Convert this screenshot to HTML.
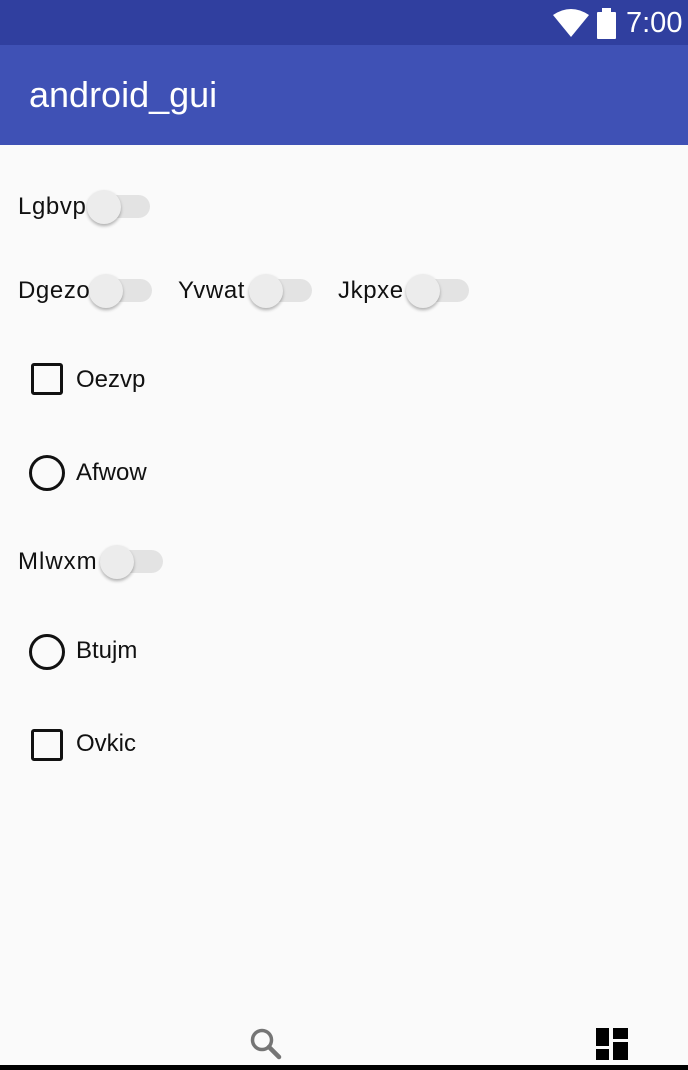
<!DOCTYPE html>
<html><head><meta charset="utf-8"><style>
*{margin:0;padding:0;box-sizing:border-box}
body{width:688px;height:1070px;overflow:hidden;background:#fafafa;font-family:"Liberation Sans",sans-serif;position:relative}
.abs{position:absolute}
.t{position:absolute;font-size:24px;color:#111;line-height:26px}
.s{letter-spacing:0.6px}
.track{position:absolute;height:23px;width:62px;border-radius:12px;background:#e3e3e3}
.thumb{position:absolute;width:34px;height:34px;border-radius:50%;background:#ececec;box-shadow:0 2px 3px rgba(0,0,0,.3)}
.cb{position:absolute;width:32px;height:32px;border:3.5px solid #111;border-radius:3px}
.rb{position:absolute;width:36px;height:36px;border:3.5px solid #111;border-radius:50%}
</style></head><body>
<div class="abs" style="left:0;top:0;width:688px;height:45px;background:#303f9f"></div>
<svg class="abs" style="left:553px;top:9px" width="36" height="28" viewBox="0 0 36 28"><path d="M0 6 Q18 -6 36 6 L18 28 Z" fill="#fff"/></svg>
<div class="abs" style="left:597px;top:12px;width:19px;height:27px;background:#fff;border-radius:1px"></div>
<div class="abs" style="left:602px;top:8px;width:9px;height:5px;background:#fff"></div>
<div class="abs" style="left:626px;top:6px;font-size:29px;color:#fff;line-height:34px">7:00</div>
<div class="abs" style="left:0;top:45px;width:688px;height:100px;background:#3f51b5"></div>
<div class="abs" style="left:29px;top:75px;font-size:36px;color:#fff;line-height:40px">android_gui</div>

<div class="t s" style="left:18px;top:194px">Lgbvp</div>
<div class="track" style="left:88px;top:195px"></div><div class="thumb" style="left:87px;top:190px"></div>

<div class="t s" style="left:18px;top:278px">Dgezo</div>
<div class="track" style="left:90px;top:279px"></div><div class="thumb" style="left:89px;top:274px"></div>
<div class="t s" style="left:178px;top:278px">Yvwat</div>
<div class="track" style="left:250px;top:279px"></div><div class="thumb" style="left:249px;top:274px"></div>
<div class="t s" style="left:338px;top:278px">Jkpxe</div>
<div class="track" style="left:407px;top:279px"></div><div class="thumb" style="left:406px;top:274px"></div>

<div class="cb" style="left:31px;top:363px"></div>
<div class="t" style="left:76px;top:367px">Oezvp</div>
<div class="rb" style="left:29px;top:455px"></div>
<div class="t" style="left:76px;top:460px">Afwow</div>

<div class="t s" style="left:18px;top:549px;letter-spacing:1px">Mlwxm</div>
<div class="track" style="left:101px;top:550px"></div><div class="thumb" style="left:100px;top:545px"></div>

<div class="rb" style="left:29px;top:634px"></div>
<div class="t" style="left:76px;top:638px">Btujm</div>
<div class="cb" style="left:31px;top:729px"></div>
<div class="t" style="left:76px;top:731px">Ovkic</div>

<svg class="abs" style="left:249px;top:1027px" width="34" height="34" viewBox="0 0 34 34"><circle cx="13" cy="13" r="9.5" fill="none" stroke="#757575" stroke-width="3.5"/><path d="M20 20 L30 30" stroke="#757575" stroke-width="4.5" stroke-linecap="round"/></svg>
<div class="abs" style="left:596px;top:1028px;width:13px;height:18px;background:#000"></div>
<div class="abs" style="left:596px;top:1049px;width:13px;height:11px;background:#000"></div>
<div class="abs" style="left:613px;top:1028px;width:15px;height:11px;background:#000"></div>
<div class="abs" style="left:613px;top:1042px;width:15px;height:18px;background:#000"></div>
<div class="abs" style="left:0;top:1065px;width:688px;height:5px;background:#000"></div>
</body></html>
